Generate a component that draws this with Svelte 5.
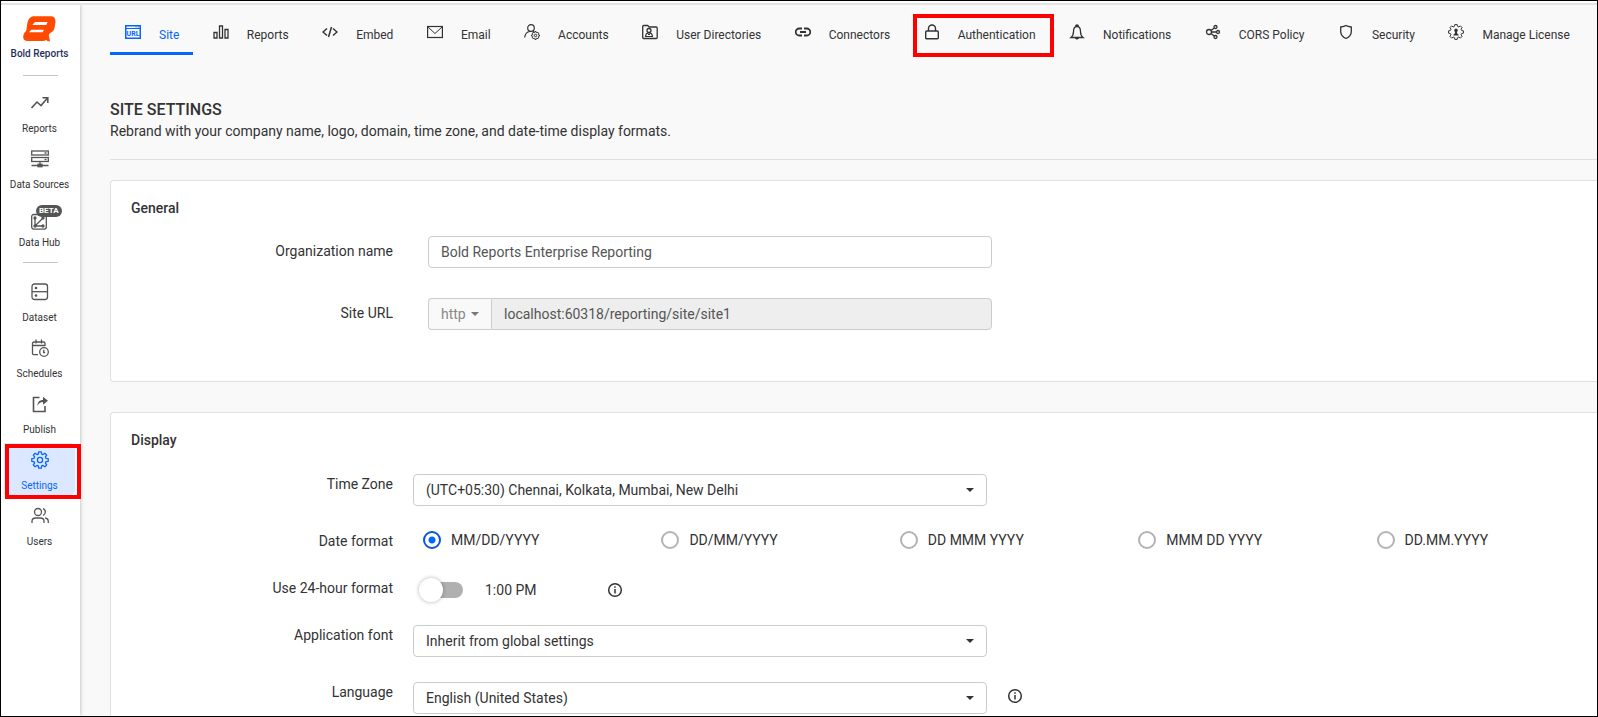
<script>
    let timeZone = 'ist';
    let font = 'inherit';
    let language = 'en-US';
    let dateFormat = 'MM/DD/YYYY';
    let use24Hour = false;
    let organization = 'Bold Reports Enterprise Reporting';
    let siteUrl = 'localhost:60318/reporting/site/site1';

    const dateFormats = ['MM/DD/YYYY', 'DD/MM/YYYY', 'DD MMM YYYY', 'MMM DD YYYY', 'DD.MM.YYYY'];

    // outline of a cog, shared by the settings, accounts and license icons
    function cog(cx, cy, outer, inner, teeth) {
        const points = [];
        for (let i = 0; i < teeth; i++) {
            const a = (i * 2 * Math.PI) / teeth;
            const step = Math.PI / teeth;
            [[-0.7, inner], [-0.4, outer], [0.4, outer], [0.7, inner]].forEach(([k, r]) => {
                points.push(`${(cx + r * Math.sin(a + k * step)).toFixed(2)},${(cy - r * Math.cos(a + k * step)).toFixed(2)}`);
            });
        }
        return `<path stroke-linejoin="round" d="M${points.join('L')}Z"/>`;
    }

    // 16x16 drawings
    const tabs = [
        { name: 'Site', active: true, icon: '<rect x=".75" y="1.75" width="14.5" height="12.5" stroke-width="1.5"/><path d="M1 4.5h14M10.5 3h1M12.7 3h1"/><text x="8" y="12" font-size="7" font-weight="700" text-anchor="middle" fill="currentColor" stroke="none">URL</text>' },
        { name: 'Reports', icon: '<path d="M1 8.500h3V14H1ZM6.500 2h3v12h-3ZM12 5.500h3V14h-3Z" stroke-width="1.300"/>' },
        { name: 'Embed', icon: '<path d="M5 4.500 1 8l4 3.500M11 4.500 15 8l-4 3.500M9.500 3 6.500 13" stroke-width="1.500"/>' },
        { name: 'Email', icon: '<rect x=".6" y="2.500" width="14.800" height="11" stroke-width="1.200"/><path d="m1 3 7 6.500L15 3"/>' },
        { name: 'Accounts', icon: '<circle cx="7" cy="4" r="3.300" stroke-width="1.200"/><path d="M.7 13.500C1 10 3 7.800 6 7.500M9 7l1 .7" stroke-width="1.200"/>' + cog(11.5, 11.5, 4, 3, 8) + '<circle cx="11.500" cy="11.500" r="1.200"/>' },
        { name: 'User Directories', icon: '<path d="M.7 2.500q0-1 1-1h4l1.500 1.500h7q1 0 1 1v9.500q0 1-1 1H1.700q-1 0-1-1Z" stroke-width="1.300"/><circle cx="7" cy="6.500" r="2" stroke-width="1.300"/><path d="M3.500 12.500c.2-2.500 1.500-3.700 3.500-3.700s3.300 1.200 3.500 3.700ZM6 10.500h2" stroke-width="1.200"/>' },
        { name: 'Connectors', icon: '<path d="M7 4.500H4.200a3.500 3.500 0 0 0 0 7H7M9 4.500h2.800a3.500 3.500 0 0 1 0 7H9M5 8h6" stroke-width="1.800"/>' },
        { name: 'Authentication', marked: true, icon: '<rect x="1.700" y="7" width="12.600" height="7.800" rx="1" stroke-width="1.400"/><path d="M4.500 7V4.500a3.500 3.500 0 0 1 7 0V7" stroke-width="1.400"/>' },
        { name: 'Notifications', icon: '<path d="M2 13.500c2-1.500 2.500-3.500 2.500-6C4.500 4 5.800 2.500 8 2.500s3.500 1.500 3.500 5c0 2.500.5 4.500 2.500 6ZM6.800 2.500v-1q1.200-1 2.400 0v1M6.500 14q1.500 1.800 3 0" stroke-width="1.300"/>' },
        { name: 'CORS Policy', icon: '<g stroke-width="1.300"><circle cx="4" cy="8" r="2.500"/><circle cx="10.500" cy="3" r="1.500"/><circle cx="13" cy="8" r="1.500"/><circle cx="10.500" cy="13" r="1.500"/><path d="m6 6.500 3.300-2.500M6.500 8h5M6 9.500l3.300 2.500"/></g>' },
        { name: 'Security', icon: '<path d="M8 1.500c1.500 1 3.500 1.300 5.300 1.500v4.500c0 3.500-2 5.500-5.300 7-3.300-1.500-5.300-3.500-5.300-7V3C4.500 2.800 6.500 2.500 8 1.500Z" stroke-width="1.300"/>' },
        { name: 'Manage License', icon: cog(8, 8, 7.5, 5.8, 8) + '<path d="M5.500 11.500h5v-1L9 9.300V8q.8-.8.8-2Q9.500 4.500 8 4.500T6.200 6q0 1.200.8 2v1.300l-1.500 1.200Z" fill="currentColor" stroke="none"/>' }
    ];

    // 18x18 drawings
    const topMenu = [
        { name: 'Reports', icon: '<path d="m.5 14 5.500-6 4 3.500L16.500 4M11.500 3.700h5.300V9" stroke-width="1.600"/>' },
        { name: 'Data Sources', icon: '<rect x=".7" y="1" width="16.600" height="4"/><rect x=".7" y="7.500" width="16.600" height="4"/><path d="M13.500 3h2M13.500 9.500h2M9 11.500V15M.5 15.500h17"/><rect x="7" y="14.300" width="4" height="2.400" fill="currentColor"/>' },
        { name: 'Data Hub', beta: true, icon: '<rect x=".7" y="1.500" width="14.600" height="14.600" rx="2"/><path d="M4 5v8h8M4 13l8-8"/><circle cx="4" cy="5" r="1" fill="currentColor"/><circle cx="4" cy="13" r="1" fill="currentColor"/><circle cx="12" cy="13" r="1" fill="currentColor"/><circle cx="12" cy="5" r="1" fill="currentColor"/>' }
    ];
    const menu = [
        { name: 'Dataset', icon: '<rect x="1" y="1" width="15.500" height="15.500" rx="2.500"/><path d="M1 8.700h15.500"/><circle cx="5" cy="5" r=".7" fill="currentColor"/><circle cx="5" cy="12.500" r=".7" fill="currentColor"/>' },
        { name: 'Schedules', icon: '<path d="M7 15.700H3q-1.500 0-1.500-1.500V4.500Q1.500 3 3 3h9.500Q14 3 14 4.500V7M1.500 6.500H14M5 .5v4M10.500.5v4"/><circle cx="13" cy="13" r="4.300"/><path d="M12.700 10.800V13.500h1.500"/>' },
        { name: 'Publish', icon: '<path d="M8.500 2.500h-6v14H14V11" stroke-width="1.600"/><path d="M6.500 11c0-4 2-6 5.500-6V1.800l5 4-5 4V7c-2.500 0-4.300 1-5.500 4Z" fill="currentColor" stroke="none"/>' },
        { name: 'Settings', active: true, marked: true, icon: cog(9, 9, 8.3, 6.2, 8) + '<circle cx="9" cy="9" r="2.600"/>' },
        { name: 'Users', icon: '<circle cx="7" cy="5" r="3.500"/><path d="M1 16v-1.500Q1 11 4.500 11h5q3.500 0 3.500 3.500V16M12 1.700a3.500 3.500 0 0 1 0 6.600M14 11q3.300.5 3.300 3.500V16"/>' }
    ];
</script>

{#snippet entry(item)}
    <a class="item" class:active={item.active} class:marked={item.marked} class:tall={item.beta} href="#{item.name}">
        <svg width="18" height="18" viewBox="0 0 18 18" fill="none" stroke="currentColor" stroke-width="1.300">{@html item.icon}</svg>
        {#if item.beta}
            <span class="badge">BETA</span>
        {/if}
        <span class="item-name">{item.name}</span>
    </a>
{/snippet}

{#snippet info()}
    <svg class="info" width="16" height="16" viewBox="0 0 16 16" fill="none" stroke="currentColor" stroke-width="1.500">
        <circle cx="8" cy="8" r="6.300" />
        <path d="M8 7v4.500M8 4.200v1.500" />
    </svg>
{/snippet}

<div class="shell">
    <div class="page">
        <aside class="sidebar">
            <a class="brand" href="#home">
                <svg width="34" height="26" viewBox="0 0 102 78">
                    <path fill="#ff4a00" d="M34 1h50c10 0 15 9 13 20l-2 12c-1 10-6 15-13 18-4 2-5 5-4 9l3 16c-6 0-9-2-12-5-2 3-7 4-13 4H14C4 75-1 68 1 59c1-6 4-10 8-13 2-6 2-14 4-23C15 9 22 1 34 1Z" />
                    <path fill="#fff" d="M36 18h38l-4 9H28ZM25 41h38l-4 8H18Z" />
                </svg>
                <span>Bold Reports</span>
            </a>
            <hr />
            <nav class="menu">
                {#each topMenu as item}
                    {@render entry(item)}
                {/each}
            </nav>
            <hr />
            <nav class="menu">
                {#each menu as item}
                    {@render entry(item)}
                {/each}
            </nav>
        </aside>

        <main>
            <nav class="tabs">
                {#each tabs as tab}
                    <a class="tab" class:active={tab.active} class:marked={tab.marked} href="#{tab.name}">
                        <svg width="16" height="16" viewBox="0 0 16 16" fill="none" stroke="currentColor" stroke-width="1">{@html tab.icon}</svg>
                        <span>{tab.name}</span>
                    </a>
                {/each}
            </nav>

            <header>
                <h1>SITE SETTINGS</h1>
                <p>Rebrand with your company name, logo, domain, time zone, and date-time display formats.</p>
            </header>

            <section class="card general">
                <h2>General</h2>
                <div class="row">
                    <label for="organization">Organization name</label>
                    <input id="organization" class="box wide" type="text" bind:value={organization} />
                </div>
                <div class="row">
                    <label for="site-url">Site URL</label>
                    <div class="wide url">
                        <div class="select scheme">
                            <select class="box" aria-label="Scheme" disabled>
                                <option>http</option>
                            </select>
                        </div>
                        <input id="site-url" class="box" type="text" value={siteUrl} disabled />
                    </div>
                </div>
            </section>

            <section class="card display">
                <h2>Display</h2>
                <div class="row">
                    <label for="time-zone">Time Zone</label>
                    <div class="select">
                        <select id="time-zone" class="box" bind:value={timeZone}>
                            <option value="ist">(UTC+05:30) Chennai, Kolkata, Mumbai, New Delhi</option>
                        </select>
                    </div>
                </div>
                <div class="row short">
                    <span class="label" id="date-format">Date format</span>
                    <div class="formats" role="radiogroup" aria-labelledby="date-format">
                        {#each dateFormats as format}
                            <label class="radio">
                                <input type="radio" name="date-format" value={format} bind:group={dateFormat} />
                                {format}
                            </label>
                        {/each}
                    </div>
                </div>
                <div class="row short">
                    <label for="use-24">Use 24-hour format</label>
                    <div class="hours">
                        <input id="use-24" class="toggle" type="checkbox" bind:checked={use24Hour} />
                        <span class="sample">{use24Hour ? '13:00' : '1:00 PM'}</span>
                        {@render info()}
                    </div>
                </div>
                <div class="row">
                    <label for="font">Application font</label>
                    <div class="select">
                        <select id="font" class="box" bind:value={font}>
                            <option value="inherit">Inherit from global settings</option>
                        </select>
                    </div>
                </div>
                <div class="row">
                    <label for="language">Language</label>
                    <div class="select">
                        <select id="language" class="box" bind:value={language}>
                            <option value="en-US">English (United States)</option>
                        </select>
                    </div>
                    {@render info()}
                </div>
            </section>
        </main>
    </div>
</div>

<style>
    :global(body) {
        font-family: Roboto, "Liberation Sans", sans-serif;
        font-size: 14px;
        line-height: 20px;
        color: #333;
    }
    * {
        box-sizing: border-box;
    }
    a {
        color: inherit;
        text-decoration: none;
    }
    svg {
        flex: none;
    }
    .shell {
        display: flex;
        height: 100vh;
        padding-top: 2px;
        border: 1px solid #000;
        background: #fff;
    }
    .page {
        flex: 1;
        min-width: 0;
        display: flex;
        overflow: hidden;
        border-top: 2px solid #e3e3e3;
        background: #f9f9f9;
    }

    /* sidebar */
    .sidebar {
        flex: none;
        width: 79px;
        background: #fff;
        box-shadow: 0 0 4px rgba(0, 0, 0, 0.3);
    }
    .brand {
        display: flex;
        flex-direction: column;
        align-items: center;
        gap: 5px;
        padding: 11px 2px 13px 0;
        font-size: 10px;
        line-height: 14px;
        font-weight: 500;
        color: #1f2f5c;
    }
    hr {
        width: 35px;
        margin: 1px auto 10px;
        border: 0;
        border-top: 1px solid #c4c4c4;
    }
    .menu {
        display: flex;
        flex-direction: column;
        gap: 4px;
        margin: 0 5px 10px 3px;
    }
    hr ~ hr {
        margin-bottom: 12px;
    }
    .item {
        position: relative;
        display: flex;
        flex-direction: column;
        align-items: center;
        height: 52px;
        padding-top: 8px;
        border-radius: 0 5px 5px 0;
        color: #555;
    }
    .item-name {
        margin-top: auto;
        padding-bottom: 2px;
        font-size: 10px;
        line-height: 14px;
        color: #333;
    }
    .item.tall {
        height: 54px;
        padding-top: 15px;
    }
    .item.active {
        background: #dbe8ff;
        color: #0565ff;
    }
    .item.active .item-name {
        color: #0565ff;
    }
    .badge {
        position: absolute;
        top: 7px;
        left: 32px;
        padding: 0 3px;
        border-radius: 6px;
        background: #555;
        color: #fff;
        font-size: 8px;
        line-height: 12px;
        font-weight: 700;
    }
    .marked::after {
        content: "";
        position: absolute;
        border: 4px solid #f00;
    }
    .item.marked::after {
        inset: 1px -6px -4px 1px;
    }

    /* tabs */
    .tabs {
        display: flex;
        justify-content: space-between;
        height: 50px;
        padding-right: 13px;
    }
    .tab {
        position: relative;
        display: flex;
        gap: 18px;
        padding: 19px 14px 0 15px;
        font-size: 12px;
        line-height: 22px;
        white-space: nowrap;
    }
    .tab.active {
        color: #0565ff;
        border-bottom: 3px solid #0565ff;
    }
    .tab.marked::after {
        inset: 9px -4px -2px 4px;
    }

    /* content */
    main {
        flex: 1;
        min-width: 0;
        padding-left: 30px;
    }
    header {
        margin: 44px 0 20px;
        padding-bottom: 18px;
        border-bottom: 1px solid #e0e0e0;
    }
    h1 {
        margin: 0;
        font-size: 16px;
        line-height: 22px;
        font-weight: 500;
    }
    p {
        margin: 0;
    }
    h2 {
        margin: 0;
        font-size: 14px;
        line-height: 20px;
        font-weight: 500;
    }
    .card {
        display: flex;
        flex-direction: column;
        margin-bottom: 30px;
        padding: 17px 0 51px 20px;
        border: 1px solid #e0e0e0;
        border-right: 0;
        border-radius: 4px 0 0 4px;
        background: #fff;
    }
    .general {
        gap: 30px;
    }
    .general h2 {
        margin-bottom: -12px;
    }
    .display {
        gap: 25px;
    }
    .display h2 {
        margin-bottom: -1px;
    }
    .row {
        display: flex;
        align-items: flex-start;
        gap: 20px;
        min-height: 32px;
    }
    .row.short {
        height: 22px;
        min-height: 0;
    }
    .row > label,
    .row > .label {
        flex: none;
        width: 262px;
        text-align: right;
    }
    .general .row {
        gap: 35px;
    }
    .general label {
        padding-top: 5px;
    }
    .box {
        width: 100%;
        height: 32px;
        padding: 0 12px;
        border: 1px solid #ccc;
        border-radius: 4px;
        background: #fff;
        font: inherit;
        color: #333;
        appearance: none;
        opacity: 1;
    }
    input.box {
        color: #555;
    }
    .wide {
        width: 100%;
        max-width: 564px;
    }
    .url {
        display: flex;
    }
    .url input {
        border-radius: 0 4px 4px 0;
        background: #eee;
    }
    .select {
        position: relative;
        flex: 0 1 574px;
    }
    .select::after {
        content: "";
        position: absolute;
        top: 14px;
        right: 13px;
        border: 4px solid transparent;
        border-top-color: #333;
        border-bottom: 0;
        pointer-events: none;
    }
    .scheme {
        flex: none;
        width: 63px;
    }
    .scheme::after {
        right: 12px;
        border-top-color: #777;
    }
    .scheme .box {
        border-right: 0;
        border-radius: 4px 0 0 4px;
        background: #f9f9f9;
        color: #888;
    }
    .formats {
        flex: 1;
        display: grid;
        grid-template-columns: repeat(5, 1fr);
        column-gap: 18px;
        padding-left: 10px;
    }
    .radio {
        display: flex;
        align-items: center;
        gap: 10px;
        height: 18px;
        white-space: nowrap;
    }
    .radio input {
        flex: none;
        width: 18px;
        height: 18px;
        margin: 0;
        border: 2px solid #b3b3b3;
        border-radius: 50%;
        appearance: none;
    }
    .radio input:checked {
        border-color: #0a55d6;
        background: radial-gradient(circle, #0565ff 3px, #fff 4px);
    }
    .hours {
        display: flex;
        align-items: center;
        height: 24px;
        padding-left: 10px;
    }
    .toggle {
        position: relative;
        width: 40px;
        height: 16px;
        margin: 0 22px 0 0;
        border-radius: 8px;
        background: #b0b0b0;
        appearance: none;
    }
    .toggle::before {
        content: "";
        position: absolute;
        top: -4px;
        left: -4px;
        width: 24px;
        height: 24px;
        border-radius: 50%;
        background: #fff;
        box-shadow: 0 0 4px rgba(0, 0, 0, 0.3);
    }
    .toggle:checked {
        background: #0565ff;
    }
    .toggle:checked::before {
        left: 20px;
    }
    .sample {
        width: 122px;
    }
    .row > .info {
        margin-top: 6px;
    }
</style>
